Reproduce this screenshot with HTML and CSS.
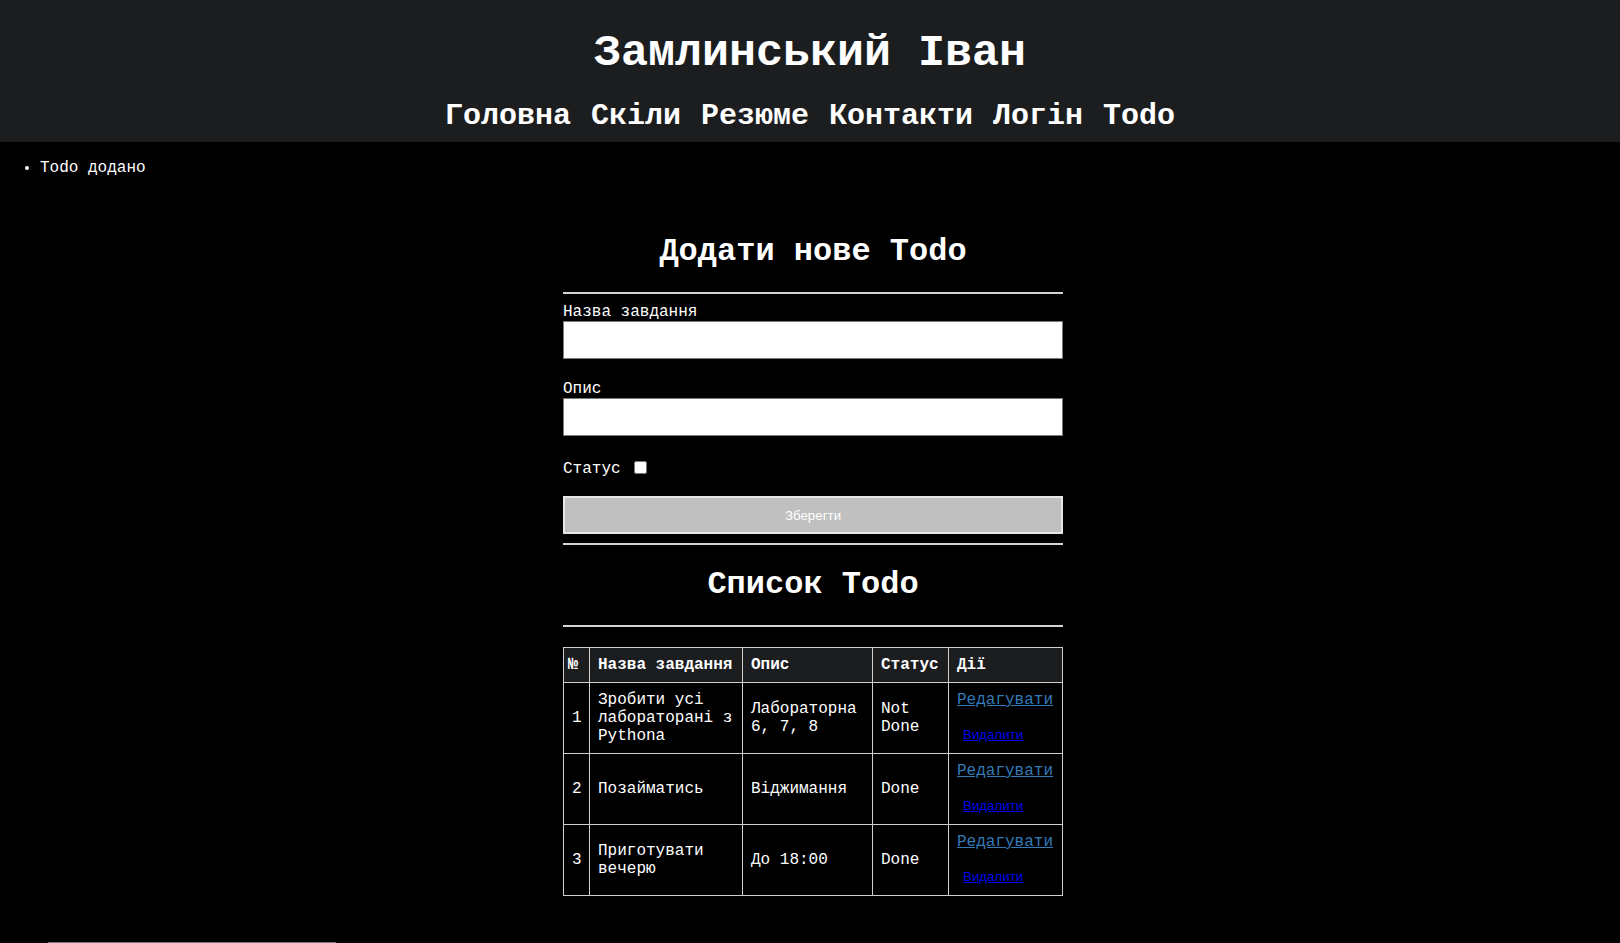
FILE: index.html
```html
<!DOCTYPE html>
<html lang="uk">
<head>
<meta charset="utf-8">
<title>Todo</title>
<link rel="stylesheet" href="styles.css">
</head>
<body>
<header class="site-header">
  <h1 class="site-title">Замлинський Іван</h1>
  <nav class="site-nav">
    <a href="#">Головна</a>
    <a href="#">Скіли</a>
    <a href="#">Резюме</a>
    <a href="#">Контакти</a>
    <a href="#">Логін</a>
    <a href="#">Todo</a>
  </nav>
</header>
<ul class="messages">
  <li>Todo додано</li>
</ul>
<main class="todo">
  <h2 class="section-title">Додати нове Todo</h2>
  <hr class="rule rule-first">
  <form class="todo-form">
    <label class="field-label" for="title">Назва завдання</label>
    <input class="field-input" id="title" type="text">
    <label class="field-label field-label-next" for="desc">Опис</label>
    <input class="field-input" id="desc" type="text">
    <div class="status-row">
      <label for="status">Статус</label>
      <input class="status-check" id="status" type="checkbox">
    </div>
    <button class="save-btn" type="button">Зберегти</button>
  </form>
  <hr class="rule rule-mid">
  <h2 class="section-title section-title-list">Список Todo</h2>
  <hr class="rule rule-list">
  <table class="todo-table">
    <colgroup>
      <col class="c-num">
      <col class="c-name">
      <col class="c-desc">
      <col class="c-status">
      <col class="c-actions">
    </colgroup>
    <thead>
      <tr>
        <th>№</th>
        <th>Назва завдання</th>
        <th>Опис</th>
        <th>Статус</th>
        <th>Дії</th>
      </tr>
    </thead>
    <tbody>
      <tr>
        <td>1</td>
        <td>Зробити усі лабораторані з Pythona</td>
        <td>Лабораторна 6, 7, 8</td>
        <td>Not Done</td>
        <td class="actions"><a class="edit-link" href="#">Редагувати</a><form class="del-form"><button class="del-btn" type="button">Видалити</button></form></td>
      </tr>
      <tr>
        <td>2</td>
        <td>Позайматись</td>
        <td>Віджимання</td>
        <td>Done</td>
        <td class="actions"><a class="edit-link" href="#">Редагувати</a><form class="del-form"><button class="del-btn" type="button">Видалити</button></form></td>
      </tr>
      <tr>
        <td>3</td>
        <td>Приготувати вечерю</td>
        <td>До 18:00</td>
        <td>Done</td>
        <td class="actions"><a class="edit-link" href="#">Редагувати</a><form class="del-form"><button class="del-btn" type="button">Видалити</button></form></td>
      </tr>
    </tbody>
  </table>
</main>
<div class="footer-line"></div>
</body>
</html>
```
FILE: styles.css
```css
html, body {
  margin: 0;
  padding: 0;
  background: #000;
}
body {
  color: #fff;
  font-family: "Liberation Mono", "Courier New", monospace;
  font-size: 16px;
}
.site-header {
  background: #1c1d1f;
  padding: 28px 0 9px;
  text-align: center;
}
.site-title {
  margin: 0;
  font-size: 45px;
  line-height: 51px;
  font-weight: bold;
}
.site-nav {
  margin-top: 20px;
  display: flex;
  justify-content: center;
  gap: 20px;
  line-height: 34px;
}
.site-nav a {
  color: #fff;
  text-decoration: none;
  font-size: 30px;
  font-weight: bold;
}
.messages {
  margin: 17px 0 14px;
  padding-left: 40px;
  line-height: 18px;
}
.todo {
  width: 500px;
  margin-left: calc(50% - 247px);
  padding-top: 43px;
}
.section-title {
  margin: 0;
  font-size: 32px;
  line-height: 36px;
  text-align: center;
  font-weight: bold;
}
.section-title-list {
  margin-top: 22px;
}
.rule {
  height: 0;
  border: 0;
  border-top: 2px solid #d4d4d4;
  margin: 0;
}
.rule-first { margin-top: 22px; }
.rule-mid { margin-top: 9px; }
.rule-list { margin-top: 22px; }
.todo-form {
  display: flex;
  flex-direction: column;
}
.field-label {
  display: block;
  margin-top: 9px;
  line-height: 18px;
}
.field-label-next {
  margin-top: 21px;
}
.field-input {
  box-sizing: border-box;
  width: 500px;
  height: 38px;
  margin: 0;
  border: 1px solid #7a7a7a;
  background: #fff;
}
.status-row {
  margin-top: 24px;
  display: flex;
  align-items: center;
  line-height: 18px;
}
.status-check {
  width: 13px;
  height: 13px;
  margin: 0 0 3px 13px;
}
.save-btn {
  margin-top: 18px;
  box-sizing: border-box;
  width: 500px;
  height: 38px;
  background: #c0c0c0;
  border: 2px solid #e6e6e6;
  color: #fff;
  font-family: "Liberation Sans", Arial, sans-serif;
  font-size: 13.33px;
}
.todo-table {
  margin-top: 20px;
  width: 500px;
  table-layout: fixed;
  border-collapse: collapse;
}
.c-num { width: 26px; }
.c-name { width: 153px; }
.c-desc { width: 130px; }
.c-status { width: 76px; }
.c-actions { width: 114px; }
.todo-table th,
.todo-table td {
  border: 1px solid #d0d0d0;
  padding: 8px;
  text-align: left;
  line-height: 18px;
  vertical-align: middle;
}
.todo-table th {
  background: #1c1d1f;
  font-weight: bold;
}
.todo-table th:first-child {
  padding: 8px 4px;
  font-size: 17px;
}
.edit-link {
  display: block;
  color: #337ab7;
  text-decoration: underline;
}
.del-form {
  margin: 16px 0 0;
}
.del-btn {
  display: block;
  padding: 2px 6px;
  line-height: 16px;
  border: 0;
  background: none;
  color: #0000ee;
  text-decoration: underline;
  font-family: "Liberation Sans", Arial, sans-serif;
  font-size: 13.33px;
}
.footer-line {
  margin: 46px 0 0 48px;
  width: 288px;
  border-top: 1px solid #777;
}
```
